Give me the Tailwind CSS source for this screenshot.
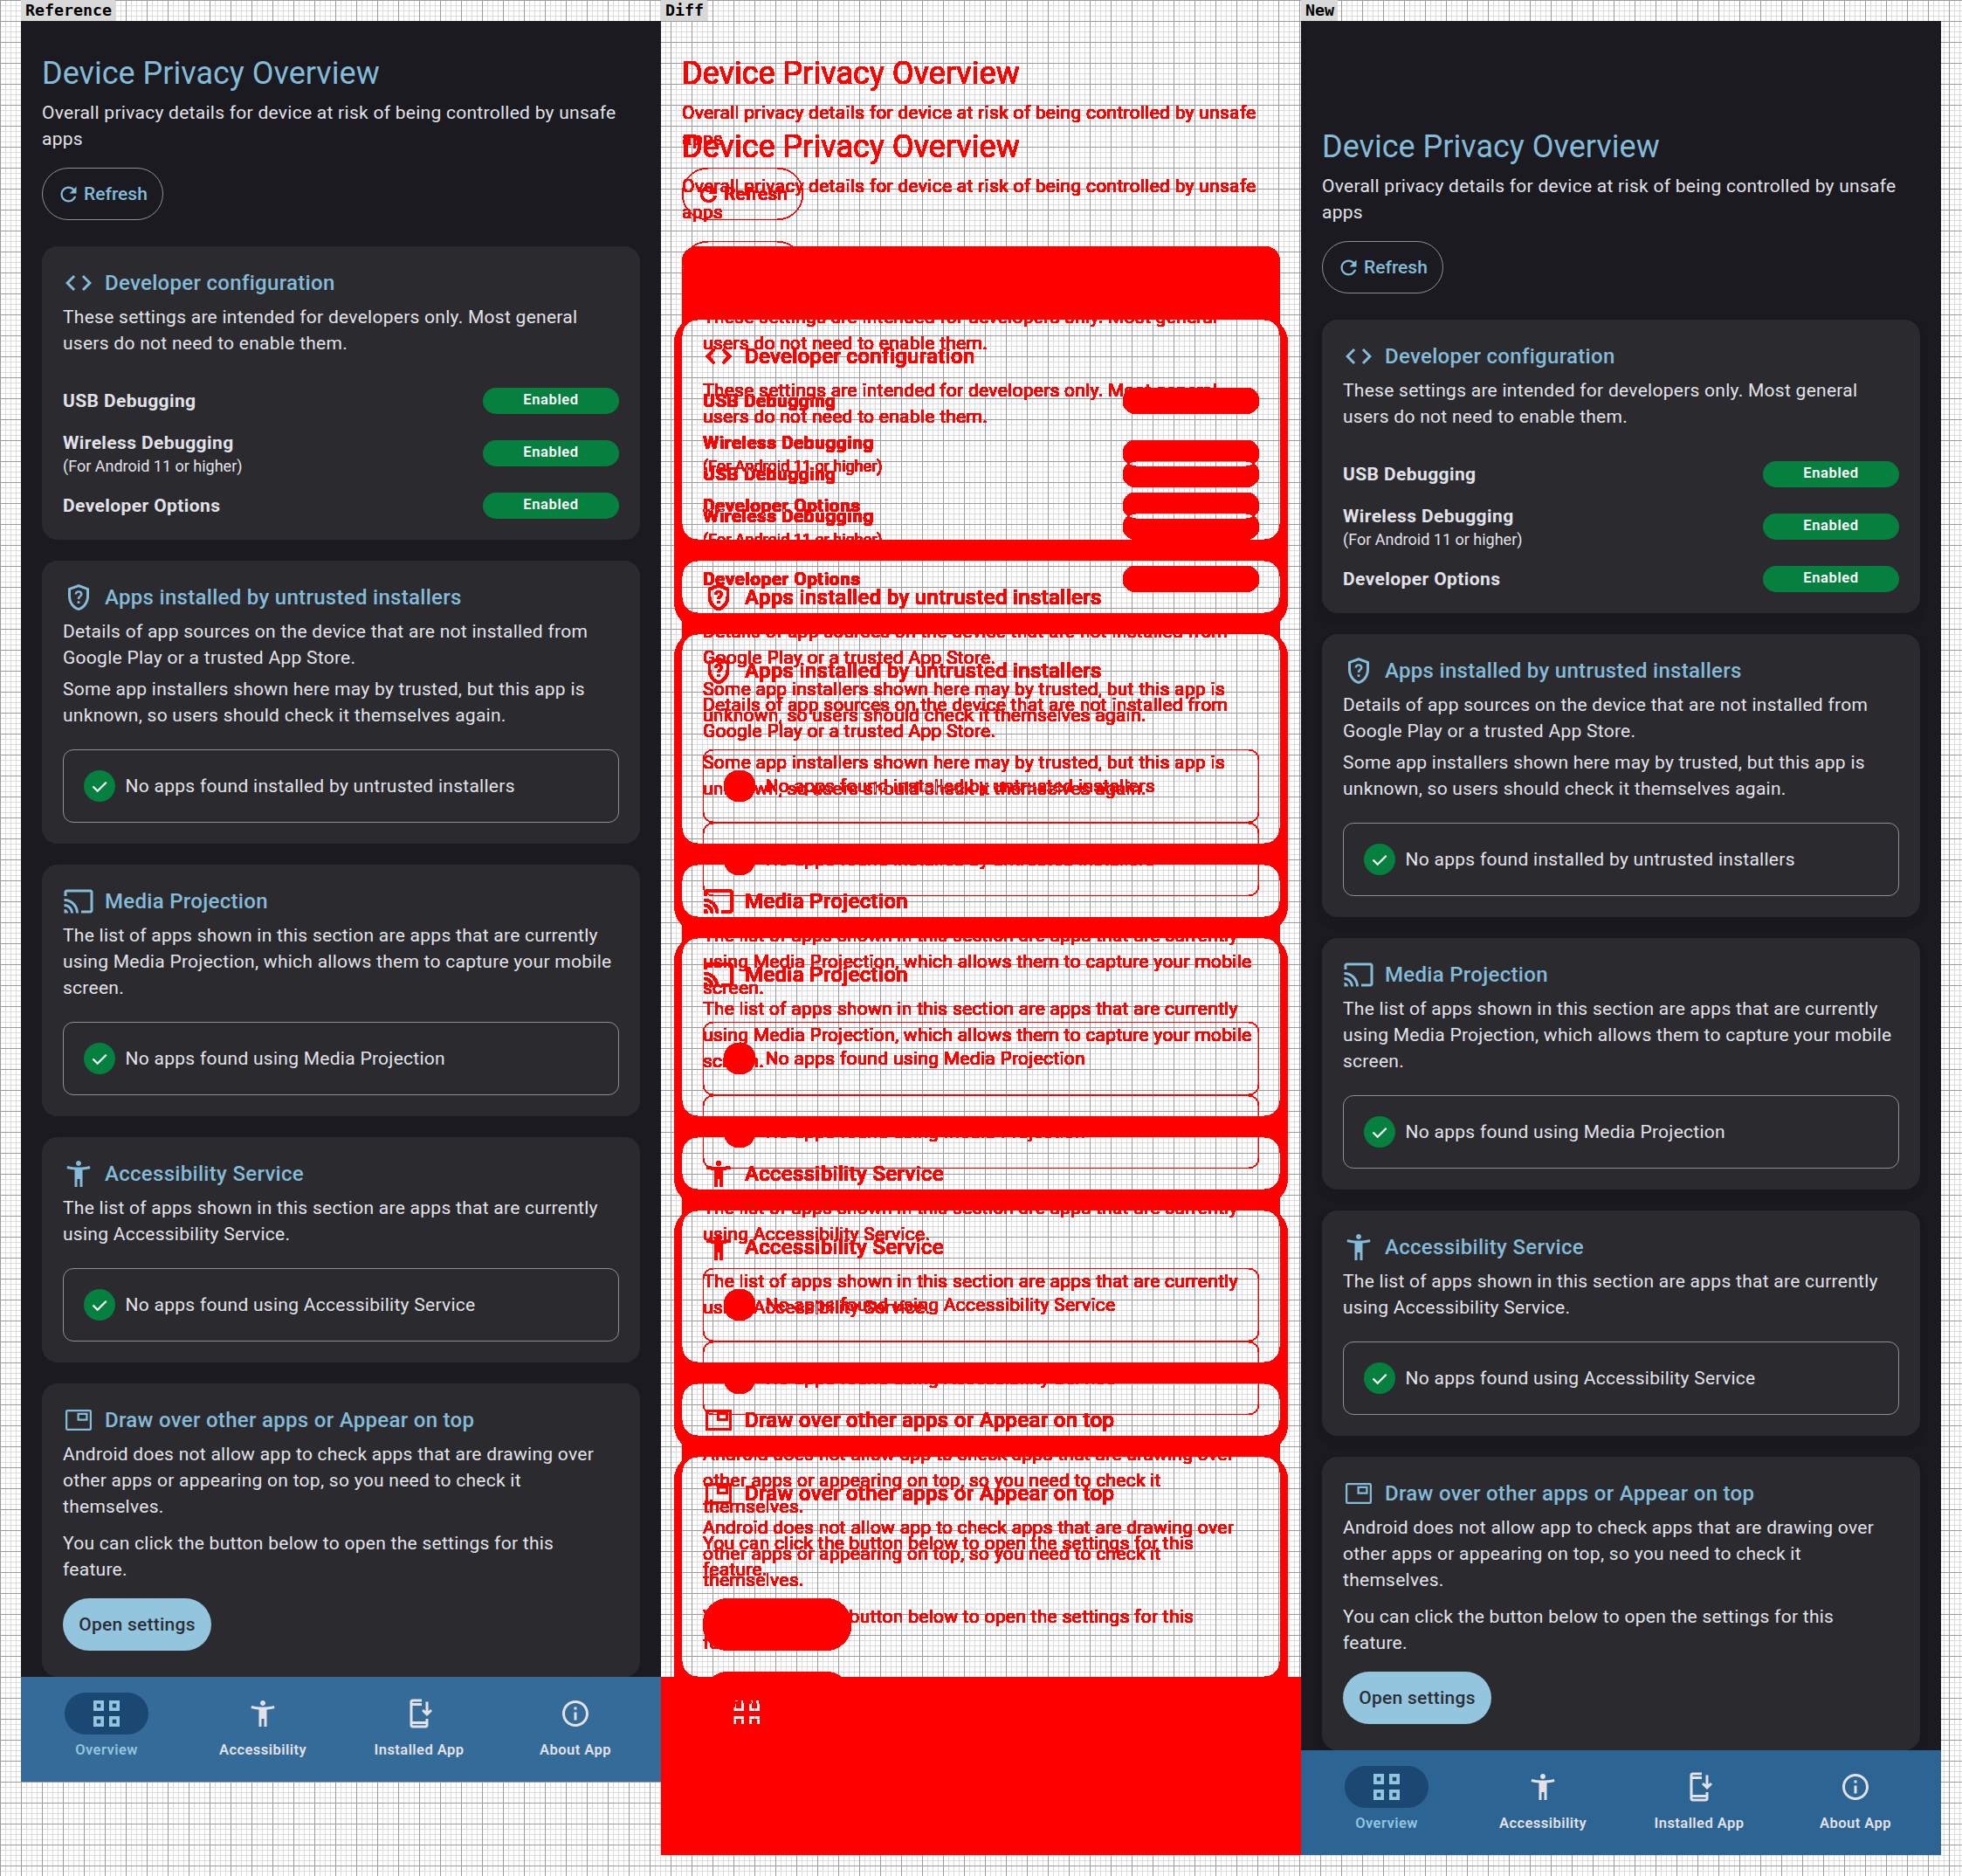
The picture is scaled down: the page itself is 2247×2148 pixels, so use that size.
<!DOCTYPE html>
<html lang="en">
  <head>
    <meta charset="utf-8" />
    <title>Device Privacy Overview</title>
    <script src="https://cdn.jsdelivr.net/npm/@tailwindcss/browser@4"></script>
  </head>

  <body class="w-[2247px] h-[2148px] overflow-hidden bg-white bg-[linear-gradient(#9a9a9a_1px,transparent_1px),linear-gradient(90deg,#9a9a9a_1px,transparent_1px),linear-gradient(#dcdcdc_1px,transparent_1px),linear-gradient(90deg,#dcdcdc_1px,transparent_1px)] bg-[size:24px_24px,24px_24px,6px_6px,6px_6px] font-['Roboto',sans-serif]">
    <svg class="absolute w-0 h-0">
      <filter id="diff" color-interpolation-filters="sRGB" x="0" y="0" width="1" height="1">
        <feColorMatrix values="0 0 0 0 1  0 0 0 0 0  0 0 0 0 0  100 100 100 0 0" />
      </filter>
    </svg>

    <div class="flex pl-[24px]">
      <!-- Reference -->
      <section class="w-[733px] flex flex-col">
        <div class="self-start h-[24px] pl-[5px] pr-[4px] bg-[#d9d9d9] text-black font-['DejaVu_Sans_Mono',monospace] font-bold text-[18.3px] leading-[24px]">Reference</div>
        <div data-screen class="w-[733px] h-[2016px] flex flex-col overflow-hidden bg-[#1a1a20] [--nav:#356b99]"></div>
      </section>

      <!-- Diff -->
      <section class="w-[733px] flex flex-col">
        <div class="self-start h-[24px] pl-[5px] pr-[4px] bg-[#d9d9d9] text-black font-['DejaVu_Sans_Mono',monospace] font-bold text-[18.3px] leading-[24px]">Diff</div>
        <div class="relative w-[733px] h-[2100px] overflow-hidden isolate bg-black [filter:url(#diff)]">
          <div data-screen class="w-[733px] h-[2016px] flex flex-col overflow-hidden bg-[#1a1a20] [--nav:#356b99]"></div>
          <div data-screen class="absolute inset-0 pt-[84px] flex flex-col overflow-hidden bg-[#1a1a20] [--nav:#2c6493] [--card-shadow:0_7px_0_8.5px_rgb(0_0_0/0.05)] mix-blend-difference"></div>
        </div>
      </section>

      <!-- New -->
      <section class="w-[733px] flex flex-col">
        <div class="self-start h-[24px] pl-[5px] pr-[4px] bg-[#d9d9d9] text-black font-['DejaVu_Sans_Mono',monospace] font-bold text-[18.3px] leading-[24px]">New</div>
        <div data-screen class="w-[733px] h-[2100px] pt-[84px] flex flex-col overflow-hidden bg-[#1a1a20] [--nav:#2c6493] [--card-shadow:0_7px_0_8.5px_rgb(0_0_0/0.05)]"></div>
      </section>
    </div>

    <template id="screen">
      <main class="flex-1 min-h-0 overflow-hidden px-[24px] pt-[36px] text-[#e3e2e9] text-[21px] leading-[30px] tracking-[0.27px]">
        <h1 class="text-[36px] leading-[48px] tracking-normal text-[#84bbd8]">Device Privacy Overview</h1>
        <p class="mt-[6px]">Overall privacy details for device at risk of being controlled by unsafe apps</p>
        <button class="mt-[18px] h-[60px] w-[139px] flex items-center pl-[16px] border-[1.5px] border-[#8e9099] rounded-full text-[#84bbd8] font-medium tracking-normal">
          <svg class="w-[27px] h-[27px] mr-[4px] fill-current" viewBox="0 0 24 24"><path d="M17.65 6.35C16.2 4.9 14.21 4 12 4c-4.42 0-7.99 3.58-7.99 8s3.57 8 7.99 8c3.73 0 6.84-2.55 7.73-6h-2.08c-.82 2.33-3.04 4-5.65 4-3.31 0-6-2.69-6-6s2.69-6 6-6c1.66 0 3.14.69 4.22 1.78L13 11h7V4l-2.35 2.35z" /></svg>
          Refresh
        </button>

        <!-- Developer configuration -->
        <div class="mt-[30px] bg-[#2a2a2f] rounded-[18px] p-[24px] [box-shadow:var(--card-shadow)]">
          <h2 class="flex items-center gap-[12px] h-[36px] text-[24px] leading-[36px] font-medium tracking-[0.3px] text-[#84bbd8]">
            <svg class="w-[36px] h-[36px] fill-current" viewBox="0 0 24 24"><path d="M9.4 16.6L4.8 12l4.6-4.6L8 6l-6 6 6 6 1.4-1.4zm5.2 0l4.6-4.6-4.6-4.6L16 6l6 6-6 6-1.4-1.4z" /></svg>
            Developer configuration
          </h2>
          <p class="mt-[6px]">These settings are intended for developers only. Most general users do not need to enable them.</p>
          <div class="mt-[36px] flex flex-col gap-[18px]">
            <div class="flex items-center justify-between">
              <div class="font-bold tracking-[0.4px]">USB Debugging</div>
              <div class="w-[156px] h-[30px] rounded-full bg-[#06803f] text-white text-center text-[16.5px] leading-[28px] font-semibold tracking-[0.6px]">Enabled</div>
            </div>
            <div class="flex items-center justify-between">
              <div>
                <div class="font-bold tracking-[0.4px]">Wireless Debugging</div>
                <div class="text-[18px] leading-[24px] tracking-normal">(For Android 11 or higher)</div>
              </div>
              <div class="w-[156px] h-[30px] rounded-full bg-[#06803f] text-white text-center text-[16.5px] leading-[28px] font-semibold tracking-[0.6px]">Enabled</div>
            </div>
            <div class="flex items-center justify-between">
              <div class="font-bold tracking-[0.4px]">Developer Options</div>
              <div class="w-[156px] h-[30px] rounded-full bg-[#06803f] text-white text-center text-[16.5px] leading-[28px] font-semibold tracking-[0.6px]">Enabled</div>
            </div>
          </div>
        </div>

        <!-- Untrusted installers -->
        <div class="mt-[24px] bg-[#2a2a2f] rounded-[18px] p-[24px] [box-shadow:var(--card-shadow)]">
          <h2 class="flex items-center gap-[12px] h-[36px] text-[24px] leading-[36px] font-medium tracking-[0.3px] text-[#84bbd8]">
            <svg class="w-[36px] h-[36px] fill-current" viewBox="0 0 24 24"><path d="M12 2L4 5v6.09c0 5.05 3.41 9.76 8 10.91 4.59-1.15 8-5.86 8-10.91V5l-8-3zm6 9.09c0 4-2.55 7.7-6 8.83-3.45-1.13-6-4.82-6-8.83V6.39l6-2.25 6 2.25v4.7z" /><path d="M11.1 14.9h1.8v1.7h-1.8zM12 6.9c-1.7 0-2.9 1.1-3 2.7h1.7c.1-.7.6-1.2 1.3-1.2.8 0 1.3.5 1.3 1.1 0 1.3-2.1 1.4-2.1 3.9h1.7c0-1.7 2.1-2 2.1-3.9 0-1.5-1.3-2.6-3-2.6z" /></svg>
            Apps installed by untrusted installers
          </h2>
          <p class="mt-[6px]">Details of app sources on the device that are not installed from Google Play or a trusted App Store.</p>
          <p class="mt-[6px]">Some app installers shown here may by trusted, but this app is unknown, so users should check it themselves again.</p>
          <div class="mt-[24px] h-[84px] flex items-center gap-[12px] pl-[22.5px] border-[1.5px] border-[#8e9099] rounded-[12px]">
            <svg class="w-[36px] h-[36px]" viewBox="0 0 36 36"><circle cx="18" cy="18" r="18" fill="#06803f" /><path d="M10.5 18.5l5.2 5.2 10-10" fill="none" stroke="#fff" stroke-width="2.2" /></svg>
            No apps found installed by untrusted installers
          </div>
        </div>

        <!-- Media Projection -->
        <div class="mt-[24px] bg-[#2a2a2f] rounded-[18px] p-[24px] [box-shadow:var(--card-shadow)]">
          <h2 class="flex items-center gap-[12px] h-[36px] text-[24px] leading-[36px] font-medium tracking-[0.3px] text-[#84bbd8]">
            <svg class="w-[36px] h-[36px] fill-current" viewBox="0 0 24 24"><path d="M21 3H3c-1.1 0-2 .9-2 2v3h2V5h18v14h-7v2h7c1.1 0 2-.9 2-2V5c0-1.1-.9-2-2-2zM1 18v3h3c0-1.66-1.34-3-3-3zm0-4v2c2.76 0 5 2.24 5 5h2c0-3.87-3.13-7-7-7zm0-4v2c4.97 0 9 4.03 9 9h2c0-6.08-4.93-11-11-11z" /></svg>
            Media Projection
          </h2>
          <p class="mt-[6px]">The list of apps shown in this section are apps that are currently using Media Projection, which allows them to capture your mobile screen.</p>
          <div class="mt-[24px] h-[84px] flex items-center gap-[12px] pl-[22.5px] border-[1.5px] border-[#8e9099] rounded-[12px]">
            <svg class="w-[36px] h-[36px]" viewBox="0 0 36 36"><circle cx="18" cy="18" r="18" fill="#06803f" /><path d="M10.5 18.5l5.2 5.2 10-10" fill="none" stroke="#fff" stroke-width="2.2" /></svg>
            No apps found using Media Projection
          </div>
        </div>

        <!-- Accessibility Service -->
        <div class="mt-[24px] bg-[#2a2a2f] rounded-[18px] p-[24px] [box-shadow:var(--card-shadow)]">
          <h2 class="flex items-center gap-[12px] h-[36px] text-[24px] leading-[36px] font-medium tracking-[0.3px] text-[#84bbd8]">
            <svg class="w-[36px] h-[36px] fill-current" viewBox="0 0 24 24"><path d="M20.5 6c-2.61.7-5.67 1-8.5 1s-5.89-.3-8.5-1L3 8c1.86.5 4 .83 6 1v13h2v-6h2v6h2V9c2-.17 4.14-.5 6-1l-.5-2zM12 6c1.1 0 2-.9 2-2s-.9-2-2-2-2 .9-2 2 .9 2 2 2z" /></svg>
            Accessibility Service
          </h2>
          <p class="mt-[6px]">The list of apps shown in this section are apps that are currently using Accessibility Service.</p>
          <div class="mt-[24px] h-[84px] flex items-center gap-[12px] pl-[22.5px] border-[1.5px] border-[#8e9099] rounded-[12px]">
            <svg class="w-[36px] h-[36px]" viewBox="0 0 36 36"><circle cx="18" cy="18" r="18" fill="#06803f" /><path d="M10.5 18.5l5.2 5.2 10-10" fill="none" stroke="#fff" stroke-width="2.2" /></svg>
            No apps found using Accessibility Service
          </div>
        </div>

        <!-- Draw over other apps -->
        <div class="mt-[24px] bg-[#2a2a2f] rounded-[18px] px-[24px] pt-[24px] pb-[30px] [box-shadow:var(--card-shadow)]">
          <h2 class="flex items-center gap-[12px] h-[36px] text-[24px] leading-[36px] font-medium tracking-[0.3px] text-[#84bbd8]">
            <svg class="w-[36px] h-[36px] fill-current" viewBox="0 0 24 24"><path fill-rule="evenodd" d="M3.5 4h17A1.5 1.5 0 0 1 22 5.5v13a1.5 1.5 0 0 1-1.5 1.5h-17A1.5 1.5 0 0 1 2 18.5v-13A1.5 1.5 0 0 1 3.5 4zm0 1.5v13h17v-13zM11 6.5h8v6h-8zM12.5 8v3h5V8z" /></svg>
            Draw over other apps or Appear on top
          </h2>
          <p class="mt-[6px]">Android does not allow app to check apps that are drawing over other apps or appearing on top, so you need to check it themselves.</p>
          <p class="mt-[12px]">You can click the button below to open the settings for this feature.</p>
          <button class="mt-[18px] h-[60px] w-[170px] rounded-full bg-[#93c5de] text-[#2b2e36] font-medium tracking-[0.25px]">Open settings</button>
        </div>
      </main>

      <!-- Bottom navigation -->
      <nav class="h-[120px] shrink-0 grid grid-cols-4 px-[8.5px] bg-[var(--nav)] text-[#e3e2e9] text-[16.5px] leading-[24px] font-semibold tracking-[0.45px]">
        <div class="flex flex-col items-center pt-[18px] text-[#93c5de]">
          <div class="w-[96px] h-[48px] rounded-full bg-[#1a4873] flex items-center justify-center">
            <svg class="w-[36px] h-[36px] fill-current" viewBox="0 0 24 24"><path fill-rule="evenodd" d="M2 2h8v8H2zM4.5 4.5v3h3v-3zM14 2h8v8h-8zM16.5 4.5v3h3v-3zM2 14h8v8H2zM4.5 16.5v3h3v-3zM14 14h8v8h-8zM16.5 16.5v3h3v-3z" /></svg>
          </div>
          <div class="mt-[6px]">Overview</div>
        </div>
        <div class="flex flex-col items-center pt-[18px]">
          <div class="w-[96px] h-[48px] flex items-center justify-center">
            <svg class="w-[36px] h-[36px] fill-current" viewBox="0 0 24 24"><path d="M20.5 6c-2.61.7-5.67 1-8.5 1s-5.89-.3-8.5-1L3 8c1.86.5 4 .83 6 1v13h2v-6h2v6h2V9c2-.17 4.14-.5 6-1l-.5-2zM12 6c1.1 0 2-.9 2-2s-.9-2-2-2-2 .9-2 2 .9 2 2 2z" /></svg>
          </div>
          <div class="mt-[6px]">Accessibility</div>
        </div>
        <div class="flex flex-col items-center pt-[18px]">
          <div class="w-[96px] h-[48px] flex items-center justify-center">
            <svg class="w-[36px] h-[36px] fill-current" viewBox="0 0 24 24"><path d="M17 18H7V6h7V4H7V3h7V1H7c-1.1 0-2 .9-2 2v18c0 1.1.9 2 2 2h10c1.1 0 2-.9 2-2v-5h-2v2zm0 3H7v-1h10v1zM18 14l4-4-1.41-1.41L19 10.17V3h-2v7.17l-1.59-1.58L14 10l4 4z" /></svg>
          </div>
          <div class="mt-[6px]">Installed App</div>
        </div>
        <div class="flex flex-col items-center pt-[18px]">
          <div class="w-[96px] h-[48px] flex items-center justify-center">
            <svg class="w-[36px] h-[36px] fill-current" viewBox="0 0 24 24"><path d="M11 7h2v2h-2zm0 4h2v6h-2zm1-9C6.48 2 2 6.48 2 12s4.48 10 10 10 10-4.48 10-10S17.52 2 12 2zm0 18c-4.41 0-8-3.59-8-8s3.59-8 8-8 8 3.59 8 8-3.59 8-8 8z" /></svg>
          </div>
          <div class="mt-[6px]">About App</div>
        </div>
      </nav>
    </template>

    <script>
      // the same screen is shown in all three panels
      const screen = document.getElementById('screen');
      document.querySelectorAll('[data-screen]').forEach(el => el.append(screen.content.cloneNode(true)));
    </script>
  </body>
</html>
